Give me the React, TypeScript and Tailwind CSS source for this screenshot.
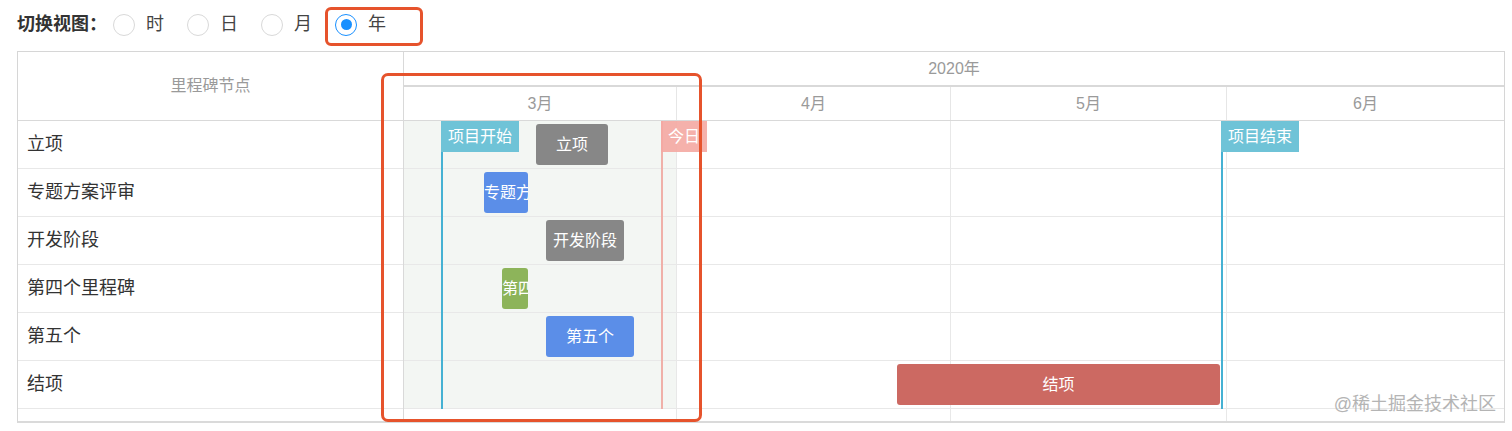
import React from "react";

const rows = [
  { name: "立项", bar: { left: 132, width: 72, color: "bg-[#878787]" } },
  { name: "专题方案评审", bar: { left: 80, width: 44, color: "bg-[#5b8ee8]" } },
  { name: "开发阶段", bar: { left: 142, width: 78, color: "bg-[#878787]" } },
  { name: "第四个里程碑", bar: { left: 98, width: 26, color: "bg-[#8db45a]" } },
  { name: "第五个", bar: { left: 142, width: 88, color: "bg-[#5b8ee8]" } },
  { name: "结项", bar: { left: 493, width: 323, color: "bg-[#cc6962]" } },
];

const months = ["3月", "4月", "5月", "6月"];

const markers = [
  { label: "项目开始", left: 37, width: 78, line: "bg-[#45b1d3]", tag: "bg-[#6fc3d7]" },
  { label: "今日", left: 257, width: 46, line: "bg-[#f0b0a9]", tag: "bg-[#f4a9a2]/90" },
  { label: "项目结束", left: 817, width: 78, line: "bg-[#45b1d3]", tag: "bg-[#6fc3d7]" },
];

function Radio({ label, checked }: { label: string; checked?: boolean }) {
  return (
    <label className="mr-[23px] flex items-center gap-[11px]">
      <span
        className={
          checked
            ? "flex h-[22px] w-[22px] items-center justify-center rounded-full border border-[#1890ff]"
            : "h-[22px] w-[22px] rounded-full border border-[#d9d9d9]"
        }
      >
        {checked && <span className="h-[11px] w-[11px] rounded-full bg-[#1890ff]" />}
      </span>
      <span className="text-[18px] text-[#444]">{label}</span>
    </label>
  );
}

export default function App() {
  return (
    <div className="relative min-h-[431px] bg-white font-['Liberation_Sans','Noto_Sans_CJK_SC',sans-serif]">
      {/* view switcher */}
      <div className="flex h-[51px] items-center pb-[2px] pl-[17px]">
        <span className="mr-[6px] text-[18px] font-bold text-[#333]">切换视图：</span>
        <Radio label="时" />
        <Radio label="日" />
        <Radio label="月" />
        <Radio label="年" checked />
      </div>

      {/* gantt table */}
      <div className="ml-[17px] flex w-[1488px] border border-b-2 border-[#d6d6d6] border-b-[#dadada]">
        <div className="w-[386px] shrink-0 border-r border-[#d9d9d9]">
          <div className="flex h-[69px] items-center justify-center border-b border-[#d9d9d9] text-[16px] text-[#9a9a9a]">
            里程碑节点
          </div>
          {rows.map((r) => (
            <div
              key={r.name}
              className="flex h-[48px] items-center border-b border-[#e8e8e8] pl-[9px] text-[18px] text-[#333]"
            >
              {r.name}
            </div>
          ))}
          <div className="h-[12px]" />
        </div>

        <div className="min-w-0 flex-1">
          <div className="flex h-[35px] items-center justify-center border-b-2 border-[#d9d9d9] text-[16px] text-[#9a9a9a]">
            2020年
          </div>
          <div className="grid h-[34px] grid-cols-[273px_274px_276px_1fr] border-b border-[#d9d9d9]">
            {months.map((m, i) => (
              <div
                key={m}
                className={`flex items-center justify-center text-[16px] text-[#9a9a9a] ${i < 3 ? "border-r border-[#e6e6e6]" : ""}`}
              >
                {m}
              </div>
            ))}
          </div>

          <div className="relative">
            {/* month columns behind the rows */}
            <div className="absolute inset-0 grid grid-cols-[273px_274px_276px_1fr]">
              {months.map((m, i) => (
                <div key={m} className={i < 3 ? "border-r border-[#e8e8e8]" : ""}>
                  {i === 0 && <div className="h-[288px] bg-[#f3f6f3]" />}
                </div>
              ))}
            </div>

            {rows.map((r) => (
              <div key={r.name} className="relative h-[48px] border-b border-[#e8e8e8]">
                <div
                  className={`absolute top-[3px] h-[41px] overflow-hidden whitespace-nowrap rounded-[3px] text-center text-[16px] leading-[41px] text-white ${r.bar.color}`}
                  style={{ left: r.bar.left, width: r.bar.width }}
                >
                  {r.name}
                </div>
              </div>
            ))}
            <div className="h-[12px]" />

            {/* milestone markers */}
            {markers.map((mk) => (
              <div key={mk.label} className="absolute top-0 h-[288px]" style={{ left: mk.left }}>
                <div className={`absolute left-0 top-0 h-full w-[2px] ${mk.line}`} />
                <div
                  className={`relative h-[31px] pl-[7px] text-[16px] leading-[31px] text-white ${mk.tag}`}
                  style={{ width: mk.width }}
                >
                  {mk.label}
                </div>
              </div>
            ))}

            <div className="absolute bottom-[3px] right-[8px] text-[18px] text-[#b4b4b4]">
              @稀土掘金技术社区
            </div>
          </div>
        </div>
      </div>

      {/* annotation outlines */}
      <div className="absolute left-[325px] top-[7px] h-[39px] w-[98px] rounded-[6px] border-[3px] border-[#e6532c]" />
      <div className="absolute left-[381px] top-[73px] h-[349px] w-[321px] rounded-[7px] border-[3px] border-[#e6532c]" />
    </div>
  );
}
